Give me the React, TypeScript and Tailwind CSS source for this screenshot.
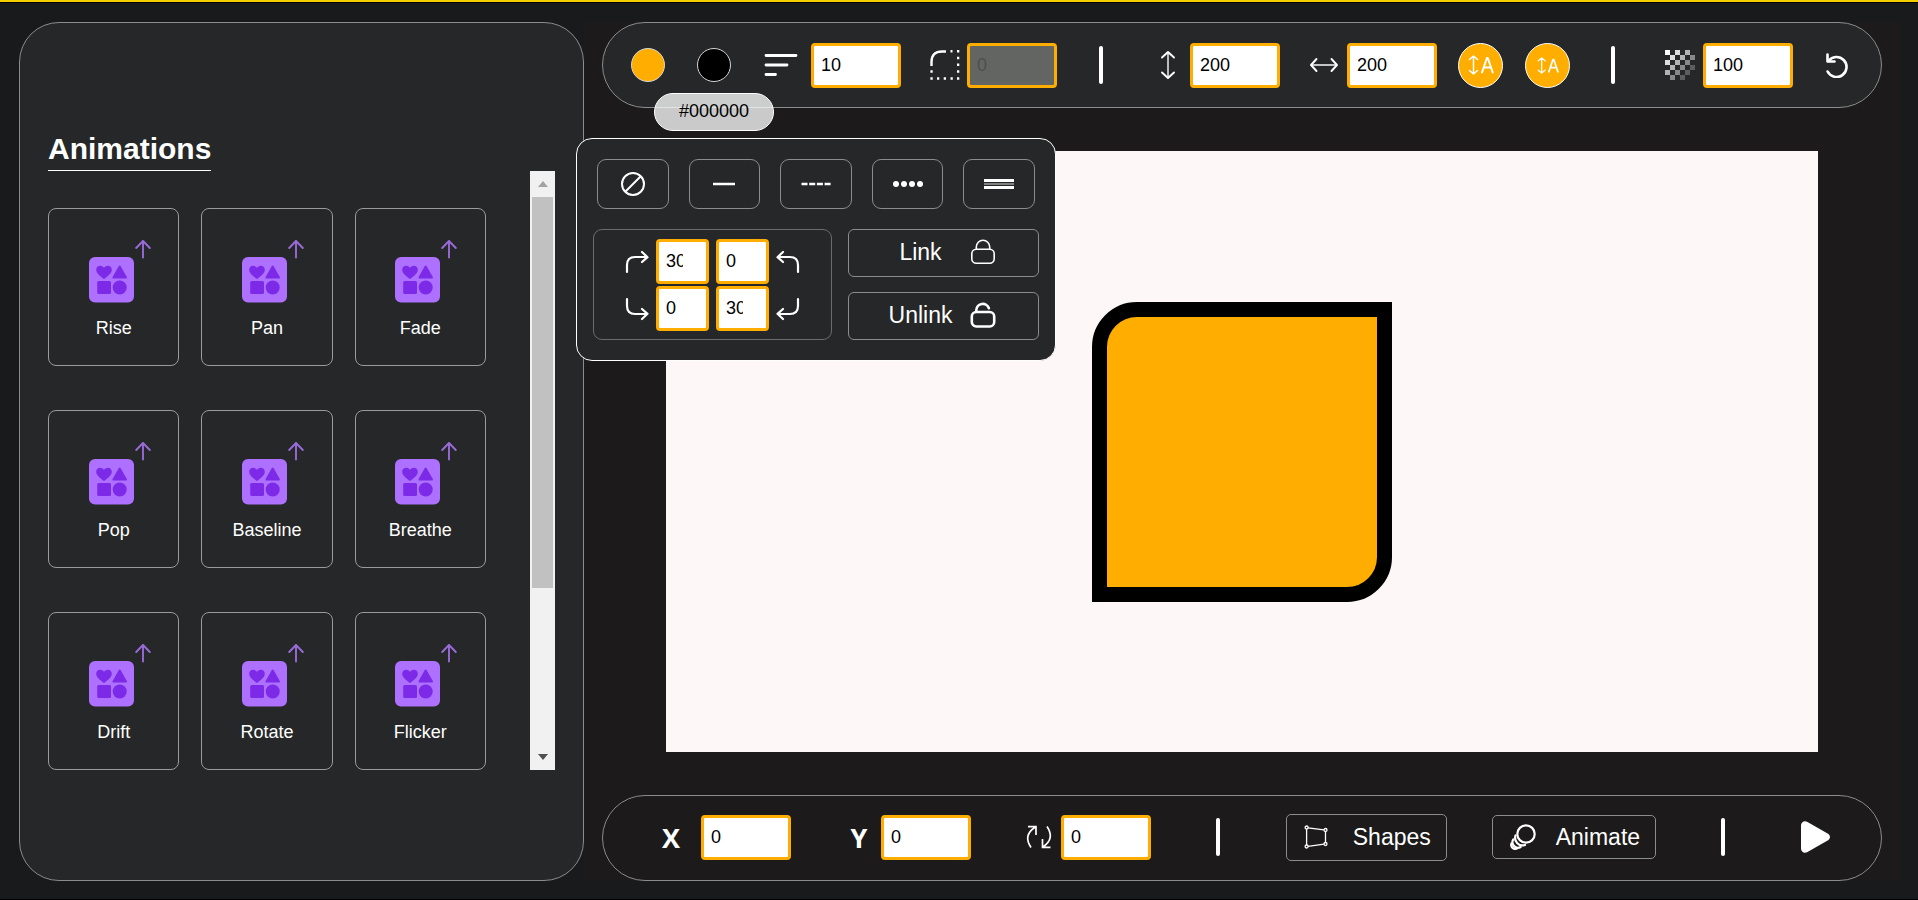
import React from "react";

type IconProps = { className?: string };

const numberInput =
  "h-[45px] rounded-[4px] border-[3px] border-[#ffae00] bg-white pl-[7px] text-lg text-black outline-none disabled:bg-[#636563] disabled:text-[#4d4f4f]";

function NumberField({ label, value, disabled, small }: { label: string; value: string; disabled?: boolean; small?: boolean }) {
  return (
    <input
      aria-label={label}
      type="text"
      inputMode="numeric"
      defaultValue={value}
      disabled={disabled}
      className={`${numberInput} ${small ? "w-[53px] pr-[23px]" : "w-[90px] pr-[7px]"}`}
    />
  );
}

function ClipIcon() {
  return (
    <svg viewBox="0 0 64 66" className="h-[66px] w-16" aria-hidden="true">
      <rect x="1" y="19" width="45" height="45.500" rx="6" fill="#ad70ff" />
      <path d="M16 41c-4-3-7.800-5.700-7.800-9.300 0-2.500 1.900-3.900 3.900-3.900 1.600 0 2.900.7 3.900 2 1-1.300 2.300-2 3.900-2 2 0 3.900 1.400 3.900 3.900 0 3.600-3.800 6.300-7.800 9.300z" fill="#7d2ae8" />
      <path d="M30.700 28.200q1-1.600 2 0L38.800 38.900q.6 1.600-.8 1.600H25.400q-1.500 0-.8-1.600z" fill="#7d2ae8" />
      <rect x="9.200" y="43" width="13.800" height="13" rx="1.500" fill="#7d2ae8" />
      <circle cx="31.700" cy="49.500" r="7" fill="#7d2ae8" />
      <path d="M55 19.500V3M48.200 10 55 3l6.800 7" fill="none" stroke="#9a6bd8" strokeWidth="1.900" strokeLinecap="round" strokeLinejoin="round" />
    </svg>
  );
}

function AlignIcon() {
  return (
    <svg viewBox="0 0 34 24" className="h-6 w-[34px]" stroke="#fff" strokeWidth="2.800" strokeLinecap="round" aria-hidden="true">
      <path d="M2 2.500h30M2 12h21M2 21.500h9.500" />
    </svg>
  );
}

function CornerIcon() {
  return (
    <svg viewBox="0 0 30 30" className="size-[30px]" fill="none" stroke="#fff" aria-hidden="true">
      <path d="M1.500 16V12Q1.500 1.500 12 1.500h4" strokeWidth="2.400" />
      <path d="M20.500 1.300h2M27 1.300h2.300M27 8h2.300M27 14.800h2.300M27 21.500h2.300M27 28.500h2.300M20.500 28.500h2.300M13.700 28.500h2.300M7 28.500h2.300M.4 28.500h2.300M.4 21.500h2.300" strokeWidth="2.400" />
    </svg>
  );
}

function HeightIcon() {
  return (
    <svg viewBox="0 0 16 30" className="h-[30px] w-4" fill="none" stroke="#fff" strokeWidth="1.900" strokeLinecap="round" strokeLinejoin="round" aria-hidden="true">
      <path d="M8 3v24" stroke="#c4c5c5" />
      <path d="M2 7.500 8 2l6 5.500M2 22.500 8 28l6-5.500" />
    </svg>
  );
}

function WidthIcon() {
  return (
    <svg viewBox="0 0 30 16" className="h-4 w-[30px]" fill="none" stroke="#fff" strokeWidth="1.900" strokeLinecap="round" strokeLinejoin="round" aria-hidden="true">
      <path d="M3 8h24" stroke="#c4c5c5" />
      <path d="M7.500 2 2 8l5.500 6M22.500 2 28 8l-5.500 6" />
    </svg>
  );
}

function SizeIcon({ className }: IconProps) {
  return (
    <svg viewBox="0 0 26 20" className={className} fill="none" stroke="#fff" strokeLinecap="round" strokeLinejoin="round" aria-hidden="true">
      <path d="M1.500 4.500 5.500 1l4 3.500M5.500 1v18M1.500 15.500l4 3.500 4-3.500" strokeWidth="1.500" />
      <path d="M14 17.500 18.900 3h.9L24.700 17.500M15.700 12.500h7.300" strokeWidth="2" />
    </svg>
  );
}

function OpacityIcon() {
  const cells: React.ReactNode[] = [];
  for (let r = 0; r < 6; r++) {
    for (let c = 0; c < 6; c++) {
      const distance = r + c;
      if (distance % 2 === 0 && distance <= 8) {
        cells.push(<rect key={`${r}-${c}`} x={c * 5} y={r * 5} width="5" height="5" fill="#fff" opacity={1.05 - distance * 0.1} />);
      }
    }
  }
  return (
    <svg viewBox="0 0 30 30" className="size-[30px]" aria-hidden="true">
      {cells}
    </svg>
  );
}

function UndoIcon() {
  return (
    <svg viewBox="0 0 22 25" className="h-[25px] w-[22px]" fill="none" stroke="#fff" strokeWidth="2.600" strokeLinecap="round" strokeLinejoin="round" aria-hidden="true">
      <path d="M1.600 18.500A10 10 0 1 0 2.500 8" />
      <path d="M1.500 1.500v7h7" />
    </svg>
  );
}

function CurveArrow({ className }: IconProps) {
  return (
    <svg viewBox="0 0 24 24" className={`size-6 ${className ?? ""}`} fill="none" stroke="#fff" strokeWidth="2.200" strokeLinecap="round" strokeLinejoin="round" aria-hidden="true">
      <path d="M2 22v-7Q2 7 10 7h12M17 2l5.500 5.200L17 12" />
    </svg>
  );
}

function LockIcon() {
  return (
    <svg viewBox="0 0 26 26" className="size-[26px]" fill="none" stroke="#fff" strokeWidth="1.600" aria-hidden="true">
      <rect x="1.800" y="10.200" width="22.400" height="14" rx="4.500" />
      <path d="M6.300 10.200V8a6.700 6.700 0 0 1 13.400 0v2.200" />
    </svg>
  );
}

function UnlockIcon() {
  return (
    <svg viewBox="0 0 26 26" className="size-[26px]" fill="none" stroke="#fff" strokeWidth="2.600" strokeLinecap="round" aria-hidden="true">
      <rect x="1.800" y="10" width="22.400" height="14.500" rx="4.500" />
      <path d="M6.300 9.500V8a6.500 6.500 0 0 1 12.600-1.800" />
    </svg>
  );
}

function ShapesIcon() {
  return (
    <svg viewBox="0 0 24 24" className="size-6" fill="none" stroke="#fff" strokeWidth="1.300" aria-hidden="true">
      <path d="M4 2.800 20 4.800M21.500 6.500v11M20 19.200 4 21.300M2.600 4v16" />
      <circle cx="2.600" cy="2.500" r="1.500" />
      <circle cx="21.500" cy="5" r="1.500" />
      <circle cx="21.500" cy="19" r="1.500" />
      <circle cx="2.600" cy="21.500" r="1.500" />
    </svg>
  );
}

function AnimateIcon() {
  return (
    <svg viewBox="0 0 26 26" className="size-[26px]" fill="none" stroke="#fff" strokeWidth="2.200" strokeLinecap="round" aria-hidden="true">
      <circle cx="16" cy="10" r="8.700" />
      <path d="M5.500 11.500a7.500 7.500 0 0 0 9.500 9.500" />
      <path d="M3.200 15.500a5.500 5.500 0 0 0 7.500 7.500" />
      <path d="M1.500 19.500a4 4 0 0 0 5.500 5" />
    </svg>
  );
}

function RotateIcon() {
  return (
    <svg viewBox="0 0 26 24" className="h-6 w-[26px]" fill="none" stroke="#fff" strokeWidth="1.700" aria-hidden="true">
      <path d="M5 22.500C0 15 0 8 9.500 2M2 1.700h8V10" />
      <path d="M21 1.500c5 7.500 5 14.500-4.500 20.800M24.500 22.300h-8V14" />
    </svg>
  );
}

function PlayIcon() {
  return (
    <svg viewBox="0 0 30 32" className="h-8 w-[30px]" fill="#fff" aria-hidden="true">
      <path d="M0 4.500C0 1 3.500-.8 6.500 1l21 12q3 3 0 6l-21 12C3.500 32.800 0 31 0 27.500z" />
    </svg>
  );
}

const Divider = ({ className }: IconProps) => <div className={`h-[38px] w-1 rounded-full bg-white ${className ?? ""}`} />;

const animations = ["Rise", "Pan", "Fade", "Pop", "Baseline", "Breathe", "Drift", "Rotate", "Flicker"];

function AnimationsPanel() {
  return (
    <aside className="flex w-[565px] shrink-0 flex-col rounded-[40px] border border-[#8b8c8c] bg-[#252728] px-7 pb-[110px] pt-[108px]">
      <div className="flex">
        <h2 className="h-10 border-b border-white text-3xl font-bold leading-[36px] text-white">Animations</h2>
      </div>
      <div className="flex justify-between">
        <div className="mt-[37px] grid w-[438px] grid-cols-3 gap-x-[22px] gap-y-11">
          {animations.map((name) => (
            <button key={name} type="button" className="flex h-[158px] flex-col items-center rounded-[8px] border border-[#9a9b9b] pt-[29px] text-lg leading-6 text-white">
              <span className="pl-3"><ClipIcon /></span>
              <span className="mt-3">{name}</span>
            </button>
          ))}
        </div>
        <div className="flex w-[25px] flex-col items-center justify-between bg-[#f1f1f1]" aria-hidden="true">
          <div className="flex h-[417px] flex-col items-center">
            <svg viewBox="0 0 10 6" className="my-[10px] h-[6px] w-[10px] shrink-0" fill="#a3a3a3"><path d="M0 6 5 0l5 6z" /></svg>
            <div className="w-[21px] grow bg-[#c1c1c1]" />
          </div>
          <svg viewBox="0 0 10 6" className="mb-[10px] h-[6px] w-[10px]" fill="#505050"><path d="M0 0h10L5 6z" /></svg>
        </div>
      </div>
    </aside>
  );
}

function BorderPopup() {
  const styleButton = "flex h-[50px] items-center justify-center rounded-[9px] border border-[#8b8c8c]";
  const linkButton = "flex h-12 items-center justify-center gap-4 rounded-[6px] border border-[#8b8c8c] pb-[2px] pr-1 text-[23px] text-white";
  return (
    <div className="absolute -left-[26px] top-[116px] z-10 flex w-[480px] flex-col gap-5 rounded-[16px] border border-white bg-[#252728] px-4 py-5">
      <div className="grid grid-cols-5 gap-5 px-1">
        <button type="button" aria-label="No border" className={styleButton}>
          <svg viewBox="0 0 24 24" className="size-6" fill="none" stroke="#fff" strokeWidth="2"><circle cx="12" cy="12" r="11" /><path d="M4.500 19.500l15-15" /></svg>
        </button>
        <button type="button" aria-label="Solid" className={styleButton}>
          <svg viewBox="0 0 24 24" className="size-6" stroke="#fff" strokeWidth="2.500"><path d="M1 12h22" /></svg>
        </button>
        <button type="button" aria-label="Dashed" className={styleButton}>
          <svg viewBox="0 0 30 24" className="h-6 w-[30px]" stroke="#fff" strokeWidth="2.300"><path d="M.5 12h6M8.200 12h6M15.900 12h6M23.600 12h6" /></svg>
        </button>
        <button type="button" aria-label="Dotted" className={styleButton}>
          <svg viewBox="0 0 30 24" className="h-6 w-[30px]" fill="#fff"><circle cx="3" cy="12" r="3" /><circle cx="11" cy="12" r="3" /><circle cx="19" cy="12" r="3" /><circle cx="27" cy="12" r="3" /></svg>
        </button>
        <button type="button" aria-label="Double" className={styleButton}>
          <svg viewBox="0 0 30 24" className="h-6 w-[30px]"><path d="M0 11h30v2H0z" fill="#808181" /><path d="M0 7h30v3H0zM0 14h30v3H0z" fill="#fff" /></svg>
        </button>
      </div>
      <div className="flex gap-4">
        <div className="flex h-[111px] w-[239px] flex-col items-center gap-[2px] rounded-[9px] border border-[#6a6b6c] pt-[9px]">
          <div className="flex items-center gap-[7px]">
            <CurveArrow />
            <NumberField label="Top left radius" value="30" small />
            <NumberField label="Top right radius" value="0" small />
            <CurveArrow className="-scale-x-100" />
          </div>
          <div className="flex items-center gap-[7px]">
            <CurveArrow className="-scale-y-100" />
            <NumberField label="Bottom left radius" value="0" small />
            <NumberField label="Bottom right radius" value="30" small />
            <CurveArrow className="-scale-100" />
          </div>
        </div>
        <div className="flex grow flex-col justify-between">
          <button type="button" className={linkButton}><span className="w-[66px] text-center">Link</span><LockIcon /></button>
          <button type="button" className={linkButton}><span className="w-[66px] text-center">Unlink</span><UnlockIcon /></button>
        </div>
      </div>
    </div>
  );
}

function TopBar() {
  return (
    <div className="flex h-[86px] items-center justify-between rounded-full border border-[#8b8c8c] bg-[#252728] pl-7 pr-[33px]">
      <button type="button" aria-label="Fill colour" className="size-[34px] rounded-full border border-[#d5d5d5] bg-[#ffae00]" />
      <div className="relative ml-[11px] flex">
        <button type="button" aria-label="Border colour" className="size-[34px] rounded-full border border-[#d5d5d5] bg-black" />
        <div role="tooltip" className="absolute -left-[43px] top-[45px] flex h-[38px] w-[120px] items-center justify-center rounded-full border border-white bg-white/77 pb-[2px] text-lg text-black">
          #000000
        </div>
      </div>
      <div className="ml-3 flex items-center gap-[13px]"><AlignIcon /><NumberField label="Border width" value="10" /></div>
      <div className="ml-2 flex items-center gap-[7px]"><CornerIcon /><NumberField label="Corner radius" value="0" disabled /></div>
      <Divider className="ml-[21px]" />
      <div className="ml-9 flex items-center gap-[14px]"><HeightIcon /><NumberField label="Height" value="200" /></div>
      <div className="ml-2 flex items-center gap-2"><WidthIcon /><NumberField label="Width" value="200" /></div>
      <button type="button" aria-label="Increase size" className="flex size-[45px] items-center justify-center rounded-full border border-white bg-[#ffae00]"><SizeIcon className="h-5 w-[26px]" /></button>
      <button type="button" aria-label="Decrease size" className="ml-px flex size-[45px] items-center justify-center rounded-full border border-white bg-[#ffae00]"><SizeIcon className="h-[17px] w-[22px]" /></button>
      <Divider className="ml-5" />
      <div className="ml-[29px] flex items-center gap-2"><OpacityIcon /><NumberField label="Opacity" value="100" /></div>
      <button type="button" aria-label="Undo" className="ml-3"><UndoIcon /></button>
    </div>
  );
}

function BottomBar() {
  const action = "flex items-center rounded-[5px] border border-[#8b8c8c] pl-[17px] pr-[15px] text-[23px] text-white";
  const axis = "w-5 text-center font-['Open_Sans',sans-serif] text-[27px] font-bold leading-none text-white";
  return (
    <div className="flex h-[86px] items-center justify-between rounded-full border border-[#8b8c8c] pb-[2px] pl-[58px] pr-[50px]">
      <div className="flex items-center gap-5"><span className={axis}>X</span><NumberField label="X" value="0" /></div>
      <div className="ml-[13px] flex items-center gap-3"><span className={axis}>Y</span><NumberField label="Y" value="0" /></div>
      <div className="ml-[10px] flex items-center gap-[9px]"><RotateIcon /><NumberField label="Rotation" value="0" /></div>
      <Divider className="ml-5" />
      <button type="button" className={`${action} ml-[21px] h-[47px] gap-[25px]`}><ShapesIcon /><span>Shapes</span></button>
      <button type="button" className={`${action} h-[44px] gap-5`}><AnimateIcon /><span>Animate</span></button>
      <Divider className="ml-5" />
      <button type="button" aria-label="Play" className="ml-[31px]"><PlayIcon /></button>
    </div>
  );
}

export default function App() {
  return (
    <div className="min-h-screen border-b border-black bg-[#191a1c] font-['Liberation_Sans',Arial,sans-serif]">
      <div className="border-b border-black"><div className="h-[2px] bg-[#f5d000]" /></div>
      <main className="flex pb-[18px] pl-[19px] pr-[17px] pt-[19px]">
        <AnimationsPanel />
        <section className="flex grow flex-col bg-[#1c1a1b] pl-[18px] pr-[19px]">
          <div className="relative flex flex-col">
            <TopBar />
            <BorderPopup />
          </div>
          <div className="mx-16 my-[43px] flex h-[601px] items-center justify-center bg-[#fef7f7]">
            <div className="size-[300px] rounded-br-[45px] rounded-tl-[45px] border-[15px] border-black bg-[#ffae00]" />
          </div>
          <BottomBar />
        </section>
      </main>
    </div>
  );
}
